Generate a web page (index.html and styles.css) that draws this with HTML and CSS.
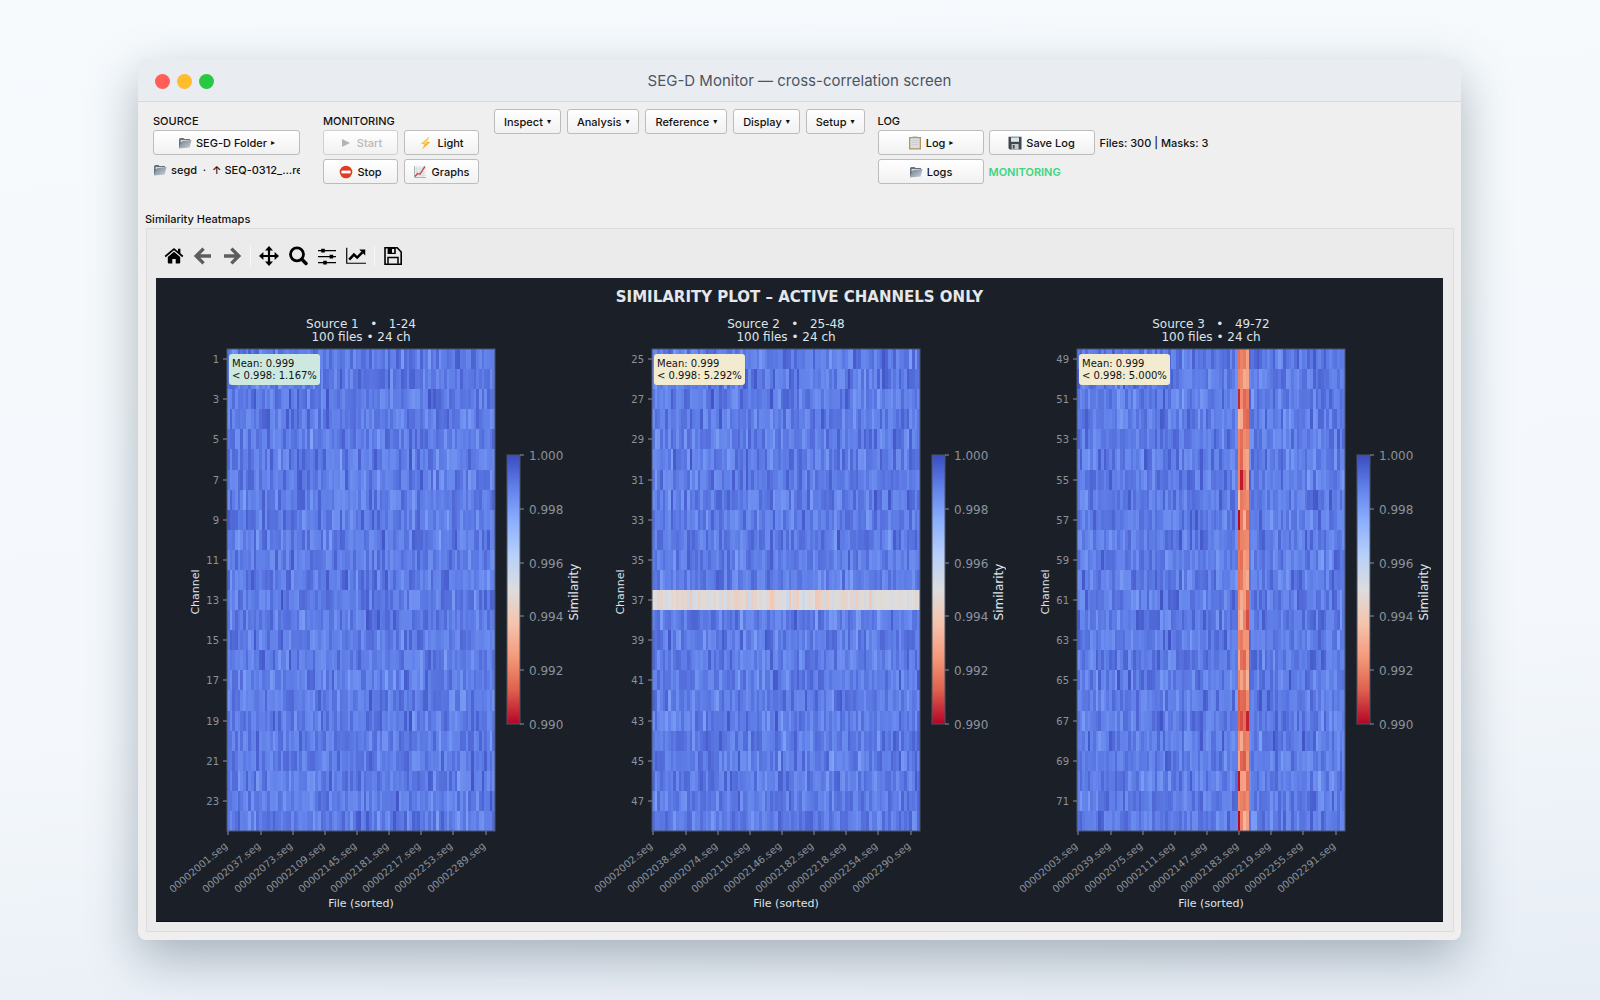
FILE: index.html
```html
<!DOCTYPE html>
<html lang="en">
<head>
<meta charset="utf-8">
<meta name="viewport" content="width=device-width, initial-scale=1">
<title>SEG-D Monitor — cross-correlation screen</title>
<link rel="stylesheet" href="styles.css">
</head>
<body>
<svg class="defs" aria-hidden="true">
  <defs>
    <linearGradient id="folderFill" x1="0" y1="0" x2="1" y2="1"><stop offset="0" stop-color="#6f7e8b"/><stop offset="1" stop-color="#c9d3da"/></linearGradient>
    <linearGradient id="barFill" x1="0" y1="0" x2="0" y2="1">
      <stop offset="0" stop-color="#3b4cc0"/><stop offset=".125" stop-color="#6282ea"/><stop offset=".25" stop-color="#8db0fe"/><stop offset=".375" stop-color="#b8d0f9"/><stop offset=".5" stop-color="#dddddd"/><stop offset=".625" stop-color="#f5c4ad"/><stop offset=".75" stop-color="#f49a7b"/><stop offset=".875" stop-color="#de604d"/><stop offset="1" stop-color="#b40426"/>
    </linearGradient>
    <symbol id="folder" viewBox="0 0 14 14"><path d="M1 12V3.2L2 2h3.5l1 1H12v2z" fill="#65727e"/><path d="M2.6 4.2h9v2h-9z" fill="#f4f6f7"/><path d="M.8 12.6 3.6 5.2 13.6 4l-2 7.4z" fill="url(#folderFill)"/></symbol>
    <symbol id="clipboard" viewBox="0 0 14 14"><path d="M1 1h12v12.5H1z" fill="#b39565"/><path d="M2.3 2.2h9.4v10H2.3z" fill="#dcdddd"/><path d="M4 4.5h6M4 6.5h6M4 8.5h6" stroke="#c6c8ca" stroke-width=".7"/><path d="M4.5.6h5v1.4h-5z" fill="#9c9c9c"/></symbol>
    <symbol id="floppy" viewBox="0 0 14 14"><path d="M.5.8h13v12.6H1.8L.5 12.2z" fill="#43484e"/><path d="M3 .8h8v5H3z" fill="#dfe7ea"/><path d="M3 .8h8v1.3H3z" fill="#7fb2c4"/><path d="M3.6 8h7v5.4h-7z" fill="#c3c7ca"/><path d="M4.8 9h1.8v3.6H4.8z" fill="#43484e"/></symbol>
  </defs>
</svg>

<main class="window">
  <header class="titlebar">
    <div class="lights"><span class="light red"></span><span class="light amber"></span><span class="light green"></span></div>
    <h1 class="title">SEG-D Monitor — cross-correlation screen</h1>
  </header>

  <div class="controls">
    <section class="group source">
      <h2 class="caption">SOURCE</h2>
      <button class="btn" type="button"><svg class="emoji"><use href="#folder"/></svg>SEG-D Folder <span class="caret">▸</span></button>
      <p class="path"><svg class="emoji"><use href="#folder"/></svg><span>segd &nbsp;·&nbsp; ↑ SEQ-0312_...re</span></p>
    </section>

    <section class="group monitoring">
      <h2 class="caption">MONITORING</h2>
      <div class="pair">
        <button class="btn" type="button" disabled><svg class="emoji" viewBox="0 0 14 14"><path d="M3 3l8 4-8 4z" fill="#b4b4b4"/></svg>Start</button>
        <button class="btn" type="button"><svg class="emoji" viewBox="0 0 14 14"><path d="M10.5.6 2 7.8l3.6.6L3 13.6l8.4-7.4-3.6-.6z" fill="#fbb72c"/><path d="M9 2.5 4 7.2l3.5.5" fill="#ffd86a"/></svg>Light</button>
        <button class="btn" type="button"><svg class="emoji" viewBox="0 0 14 14"><circle cx="7" cy="7" r="6.3" fill="#e23a24"/><path d="M2.4 5.6h9.2v2.8H2.4z" fill="#fff"/></svg>Stop</button>
        <button class="btn" type="button"><svg class="emoji" viewBox="0 0 14 14"><path d="M1 1h12v12H1z" fill="#eef2f4"/><path d="M1 4h12M1 7h12M1 10h12M4 1v12M7 1v12M10 1v12" stroke="#c3d0d8" stroke-width=".6"/><path d="M1.5 1v11.5H13" fill="none" stroke="#aab4bb"/><path d="m2 11.5 2.5-3 2.5.8 3-5L12 1.5" fill="none" stroke="#c8434a" stroke-width="1.3"/></svg>Graphs</button>
      </div>
    </section>

    <nav class="menus">
      <button class="btn" type="button">Inspect <span class="caret">▾</span></button>
      <button class="btn" type="button">Analysis <span class="caret">▾</span></button>
      <button class="btn" type="button">Reference <span class="caret">▾</span></button>
      <button class="btn" type="button">Display <span class="caret">▾</span></button>
      <button class="btn" type="button">Setup <span class="caret">▾</span></button>
    </nav>

    <section class="group log">
      <h2 class="caption">LOG</h2>
      <div class="loggrid">
        <button class="btn" type="button"><svg class="emoji"><use href="#clipboard"/></svg>Log <span class="caret">▸</span></button>
        <button class="btn" type="button"><svg class="emoji"><use href="#floppy"/></svg>Save Log</button>
        <span>Files: 300 | Masks: 3</span>
        <button class="btn" type="button"><svg class="emoji"><use href="#folder"/></svg>Logs</button>
        <strong class="status">MONITORING</strong>
      </div>
    </section>
  </div>

  <h2 class="grouptitle">Similarity Heatmaps</h2>
  <section class="panel">
    <div class="tools">
      <button class="tool" type="button" aria-label="Home"><svg viewBox="0 0 20 20"><path d="M10 5.8 3.8 11v5.6q0 .9.9.9h3.6v-4.6h3.4v4.6h3.6q.9 0 .9-.9V11z"/><path d="M1.2 10.5 10 3.2l8.8 7.3" fill="none" stroke="#000" stroke-width="1.7"/><path d="M14 2.8h2.4v5.4L14 6.2z"/></svg></button>
      <button class="tool" type="button" aria-label="Back"><svg viewBox="0 0 20 20"><path d="M10.6 2.6 3.2 10l7.4 7.4M3.8 10H18" fill="none" stroke="#5d5d5d" stroke-width="3.4"/></svg></button>
      <button class="tool" type="button" aria-label="Forward"><svg viewBox="0 0 20 20"><path d="M9.4 2.6 16.8 10l-7.4 7.4M16.2 10H2" fill="none" stroke="#5d5d5d" stroke-width="3.4"/></svg></button>
      <span class="sep"></span>
      <button class="tool" type="button" aria-label="Pan"><svg viewBox="0 0 20 20"><path d="M10 2v16M2 10h16" stroke="#000" stroke-width="2.2"/><path d="m10 0 4 4.4H6zM10 20l4-4.4H6zM0 10l4.4-4v8zM20 10l-4.4-4v8z"/></svg></button>
      <button class="tool" type="button" aria-label="Zoom"><svg viewBox="0 0 20 20"><circle cx="9" cy="8.3" r="6.5" fill="none" stroke="#000" stroke-width="2.8"/><path d="m13.8 13.2 4.2 4.3" stroke="#000" stroke-width="3.4" stroke-linecap="round"/></svg></button>
      <button class="tool" type="button" aria-label="Subplots"><svg viewBox="0 0 20 20"><path d="M1 4.6h18M1 10.6h18M1 16.6h18" stroke="#000" stroke-width="1.4"/><path d="M4.2 2.8h3.6v3.6H4.2zM12.6 8.8h3.6v3.6h-3.6zM6.2 14.8h3.6v3.6H6.2z"/></svg></button>
      <button class="tool" type="button" aria-label="Axes"><svg viewBox="0 0 22 20"><path d="M.8 1v17H22" fill="none" stroke="#000" stroke-width="1.3"/><path d="m3.5 14 5.2-5.6 3.6 3.3L18 6" fill="none" stroke="#000" stroke-width="2.7"/><path d="M14.6 2.8h6.6v6.6z"/></svg></button>
      <span class="sep"></span>
      <button class="tool" type="button" aria-label="Save"><svg viewBox="0 0 20 20"><path d="M2 1.8h12.2L18.2 6v12.2H2z" fill="none" stroke="#000" stroke-width="1.6"/><path d="M5 17.8v-6.4h10v6.4" fill="none" stroke="#000" stroke-width="1.5"/><path fill-rule="evenodd" d="M4.6 2h8.2v6H4.6zM9 3v3.8h2.2V3z"/></svg></button>
    </div>

    <div class="figure">
      <h3 class="figtitle">SIMILARITY PLOT – ACTIVE CHANNELS ONLY</h3>
      <div class="plots" id="plots"></div>
    </div>
  </section>
</main>
<script src="plots.js"></script>
</body>
</html>
```
FILE: styles.css
```css
* { box-sizing: border-box; }

body {
  margin: 0;
  min-height: 100vh;
  padding: 59px 139px 60px 138px;
  background: linear-gradient(175deg, #f6fafd 0%, #f4f8fc 65%, #e7edf5 100%);
  font: 500 11px/16px Inter, "Liberation Sans", sans-serif;
  color: #111;
}

h1, h2, h3, p { margin: 0; font: inherit; }

.defs { position: absolute; width: 0; height: 0; }

.window {
  min-width: 1200px;
  padding-bottom: 8px;
  border-radius: 8px;
  background: #efefef;
  box-shadow: 0 18px 50px rgba(60, 80, 95, .4);
}

.titlebar {
  display: grid;
  grid-template-columns: 1fr auto 1fr;
  align-items: center;
  height: 43px;
  padding: 2px 17px 0;
  border-bottom: 1px solid #d3d9e2;
  border-radius: 8px 8px 0 0;
  background: #e9edf2;
}
.lights { display: flex; gap: 7px; }
.light { width: 15px; height: 15px; border-radius: 50%; }
.red { background: #ff5f57; }
.amber { background: #febc2e; }
.green { background: #28c840; }
.title { font-size: 15px; font-weight: 400; line-height: 24px; color: #4b5563; }

.controls {
  display: flex;
  align-items: flex-start;
  height: 109px;
  padding: 7px 15px 0;
}
.group { padding-top: 4px; }
.caption { height: 17px; line-height: 16px; }
.source { width: 147px; margin-right: 23px; }
.source .btn { width: 100%; }
.monitoring { margin-right: 15px; }
.pair { display: grid; grid-template-columns: 75px 75px; gap: 4px 6px; }
.menus { display: flex; gap: 6px; margin-right: 13px; }
.menus .btn { padding: 0 9px; }
.loggrid {
  display: grid;
  grid-template-columns: 106px 106px auto;
  gap: 4px 5px;
  align-items: center;
}

.btn {
  display: flex;
  align-items: center;
  justify-content: center;
  gap: 4px;
  height: 25px;
  padding: 0 4px;
  border: 1px solid #bcbcbc;
  border-radius: 3px;
  background: linear-gradient(#ffffff, #f1f1f1);
  color: #111;
  font: inherit;
  white-space: nowrap;
}
.btn:disabled { border-color: #cfcfcf; color: #b8b8b8; }
.caret { font: 8px/16px "DejaVu Sans", sans-serif; }
.emoji { flex: none; width: 14px; height: 14px; }

.path {
  display: flex;
  align-items: center;
  gap: 4px;
  height: 30px;
  overflow: hidden;
  white-space: nowrap;
}
.status { font-weight: 600; color: #3dd580; }

.grouptitle { height: 17px; padding-left: 7px; }

.panel {
  margin: 0 7px 0 8px;
  padding: 9px 10px 9px 9px;
  border: 1px solid #dcdcdc;
  background: #ebebeb;
}
.tools { display: flex; align-items: center; height: 40px; padding: 0 0 4px 3px; }
.tool {
  display: flex;
  justify-content: center;
  width: 29px;
  padding: 0;
  border: 0;
  background: none;
}
.tool svg { width: 20px; height: 20px; }
.sep { width: 1px; height: 20px; margin: 0 3px 0 4px; background: #f8f8f8; }

.figure {
  padding: 10px 12px 0 0;
  background: #1b2028;
  border-bottom: 1px solid #0c0f14;
}
.figtitle {
  height: 20px;
  padding-left: 12px;
  font: 700 15px/18px "DejaVu Sans", sans-serif;
  color: #e5e7eb;
  text-align: center;
}
.plots { display: grid; grid-template-columns: repeat(3, 1fr); }
.plot { display: block; width: 100%; font-family: "DejaVu Sans", sans-serif; }
.plot text { white-space: pre; }
.cells { shape-rendering: crispEdges; }
.heading { font-size: 12px; fill: #dfe3ea; text-anchor: middle; }
.axis { font-size: 11px; fill: #dfe3ea; text-anchor: middle; }
.ytick { font-size: 10px; fill: #8b929d; text-anchor: end; }
.xtick { font-size: 10px; fill: #8b929d; text-anchor: end; }
.bartick { font-size: 12px; fill: #8b929d; }
.barlabel { font-size: 12px; fill: #dfe3ea; text-anchor: middle; }
.ticks { stroke: #8b929d; stroke-width: 1; fill: none; }
.stats { font-size: 10px; fill: #111; }
.frame { fill: none; stroke: #4a5568; }
```
FILE: plots.js
```js
const ROWS = 24, COLS = 100;
const LEFT = 71, TOP = 41, WIDTH = 268, HEIGHT = 482;
const BAR = { x: 351, y: 147, w: 13, h: 269 };
const STOPS = [[59,76,192],[98,130,234],[141,176,254],[184,208,249],[221,221,221],[245,196,173],[244,154,123],[222,96,77],[180,4,38]];

function colour(t) {
  const p = Math.max(0, Math.min(0.9999, t)) * 8;
  const i = Math.floor(p), f = p - i;
  return 'rgb(' + STOPS[i].map((c, k) => Math.round(c + (STOPS[i + 1][k] - c) * f)) + ')';
}

function generator(seed) {
  return () => {
    seed = (seed + 0x6D2B79F5) | 0;
    let t = Math.imul(seed ^ (seed >>> 15), 1 | seed);
    t = (t + Math.imul(t ^ (t >>> 7), 61 | t)) ^ t;
    return ((t ^ (t >>> 14)) >>> 0) / 4294967296;
  };
}

// distance below 1.000 for the four weak files of source 3, one row per channel
const BURST = [
  [.84,.80,.82,.74],[.80,.78,.70,.72],[.95,.78,.86,.82],[.68,.70,.84,.86],[.80,.84,.78,.80],[.80,.86,.74,.72],
  [.80,.97,.84,.72],[.66,.82,.80,.78],[.99,.82,.68,.84],[.86,.80,.79,.78],[.82,.84,.74,.76],[.84,.82,.74,.70],
  [.78,.70,.74,.86],[.74,.66,.80,.90],[.80,.82,.76,.76],[.72,.84,.86,.74],[.80,.72,.80,.68],[.88,.85,.86,.78],
  [.86,.90,.84,.96],[.78,.70,.82,.80],[.72,.86,.88,.76],[.98,.74,.72,.84],[.78,.80,.82,.78],[.99,.80,.66,.74]
];

function cells(source) {
  const rnd = generator(source * 977);
  const cw = WIDTH / COLS, ch = HEIGHT / ROWS;
  let out = '';
  for (let r = 0; r < ROWS; r++) {
    for (let c = 0; c < COLS; c++) {
      const n = (rnd() + rnd() + rnd()) / 3 - 0.5;
      let t = Math.max(0.02, 0.112 + n * 0.21);
      if (source === 2 && r === 12) t = 0.52 + n * 0.24;
      if (source === 3 && c >= 60 && c < 64) t = BURST[r][c - 60];
      const x = Math.round(LEFT + c * cw), y = Math.round(TOP + r * ch);
      const w = Math.round(LEFT + (c + 1) * cw) - x, h = Math.round(TOP + (r + 1) * ch) - y;
      out += `<rect x="${x}" y="${y}" width="${w}" height="${h}" fill="${colour(t)}"/>`;
    }
  }
  return out;
}

function plot(source, below, tint) {
  const first = (source - 1) * ROWS + 1;
  const mid = LEFT + WIDTH / 2, centre = 284;
  let ticks = '', labels = '';
  for (let r = 0; r < ROWS; r += 2) {
    const y = Math.round(TOP + (r + 0.5) * HEIGHT / ROWS);
    ticks += `M${LEFT - 4} ${y}h4`;
    labels += `<text class="ytick" x="${LEFT - 8}" y="${y + 4}">${first + r}</text>`;
  }
  for (let c = 0; c < COLS; c += 12) {
    const x = Math.round(LEFT + (c + 0.5) * WIDTH / COLS), y = TOP + HEIGHT;
    ticks += `M${x} ${y}v4`;
    labels += `<text class="xtick" transform="translate(${x} ${y + 16}) rotate(-40)">0000${2000 + source + c * 3}.seg</text>`;
  }
  for (let i = 0; i <= 5; i++) {
    const y = Math.round(BAR.y + i * BAR.h / 5);
    ticks += `M${BAR.x + BAR.w} ${y}h4`;
    labels += `<text class="bartick" x="${BAR.x + BAR.w + 9}" y="${y + 5}">${(1 - i * 0.002).toFixed(3)}</text>`;
  }
  return `<svg class="plot" viewBox="0 0 425 613" role="img" aria-label="Source ${source} similarity">
    <text class="heading" x="${mid}" y="20">Source ${source}   •   ${first}-${first + ROWS - 1}</text>
    <text class="heading" x="${mid}" y="33">100 files • 24 ch</text>
    <g class="cells">${cells(source)}</g>
    <rect class="frame" x="${LEFT}" y="${TOP}" width="${WIDTH}" height="${HEIGHT}"/>
    <rect x="${BAR.x}" y="${BAR.y}" width="${BAR.w}" height="${BAR.h}" fill="url(#barFill)"/>
    <rect class="frame" x="${BAR.x}" y="${BAR.y}" width="${BAR.w}" height="${BAR.h}"/>
    <path class="ticks" d="${ticks}"/>
    ${labels}
    <rect x="73" y="46" width="91" height="31" rx="3" fill="${tint}"/>
    <text class="stats" x="76" y="59">Mean: 0.999</text>
    <text class="stats" x="76" y="71">&lt; 0.998: ${below}%</text>
    <text class="axis" x="${mid}" y="599">File (sorted)</text>
    <text class="axis" transform="translate(43 ${centre}) rotate(-90)">Channel</text>
    <text class="barlabel" transform="translate(422 ${centre}) rotate(-90)">Similarity</text>
  </svg>`;
}

document.getElementById('plots').innerHTML =
  plot(1, '1.167', '#cde9df') + plot(2, '5.292', '#f3ebcf') + plot(3, '5.000', '#f3ebcf');
```
